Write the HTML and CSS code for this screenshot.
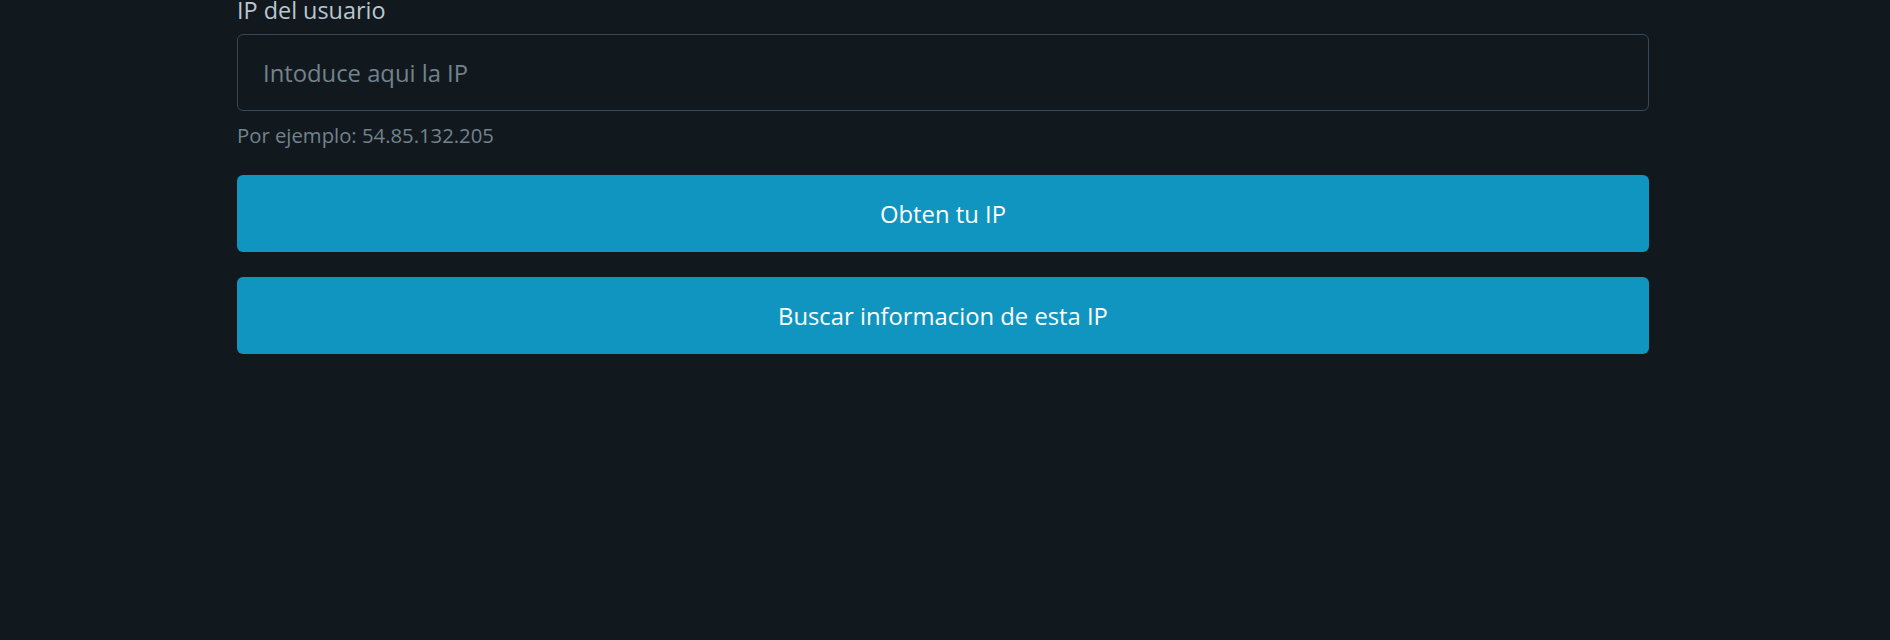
FILE: index.html
```html
<!DOCTYPE html>
<html lang="es">
<head>
<meta charset="utf-8">
<title>IP</title>
<link rel="stylesheet" href="styles.css">
</head>
<body>
<main class="container">
  <form class="ip-form">
    <label class="field-label" for="ip">IP del usuario</label>
    <input class="ip-input" id="ip" type="text" placeholder="Intoduce aqui la IP">
    <small class="helper">Por ejemplo: 54.85.132.205</small>
    <button class="btn" type="button">Obten tu IP</button>
    <button class="btn" type="button">Buscar informacion de esta IP</button>
  </form>
</main>
</body>
</html>
```
FILE: styles.css
```css
html, body {
  margin: 0;
  padding: 0;
  background: #11191f;
  height: 100%;
}
body {
  font-family: "Open Sans", "Noto Sans", sans-serif;
  color: #bbc6ce;
}
.container {
  width: 1412px;
  margin: 0 auto;
  padding-right: 4px;
}
.ip-form {
  display: flex;
  flex-direction: column;
  margin-top: -6px;
}
.field-label {
  font-size: 23.4px;
  line-height: 32px;
  color: #bbc6ce;
  margin-bottom: 8px;
}
.ip-input {
  box-sizing: border-box;
  height: 77px;
  width: 100%;
  border: 1px solid #374956;
  border-radius: 6px;
  background: #11191f;
  padding: 0 25px;
  font-family: inherit;
  font-size: 23.8px;
  color: #bbc6ce;
  outline: none;
}
.ip-input::placeholder {
  color: #73828c;
  opacity: 1;
}
.helper {
  font-size: 20.3px;
  line-height: 28px;
  color: #73828c;
  margin-top: 10px;
  margin-bottom: 26px;
}
.btn {
  box-sizing: border-box;
  height: 77px;
  width: 100%;
  border: 0;
  border-radius: 6px;
  background: #1095c1;
  color: #ffffff;
  font-family: inherit;
  font-size: 23.8px;
  margin-bottom: 25px;
  cursor: pointer;
}
```
